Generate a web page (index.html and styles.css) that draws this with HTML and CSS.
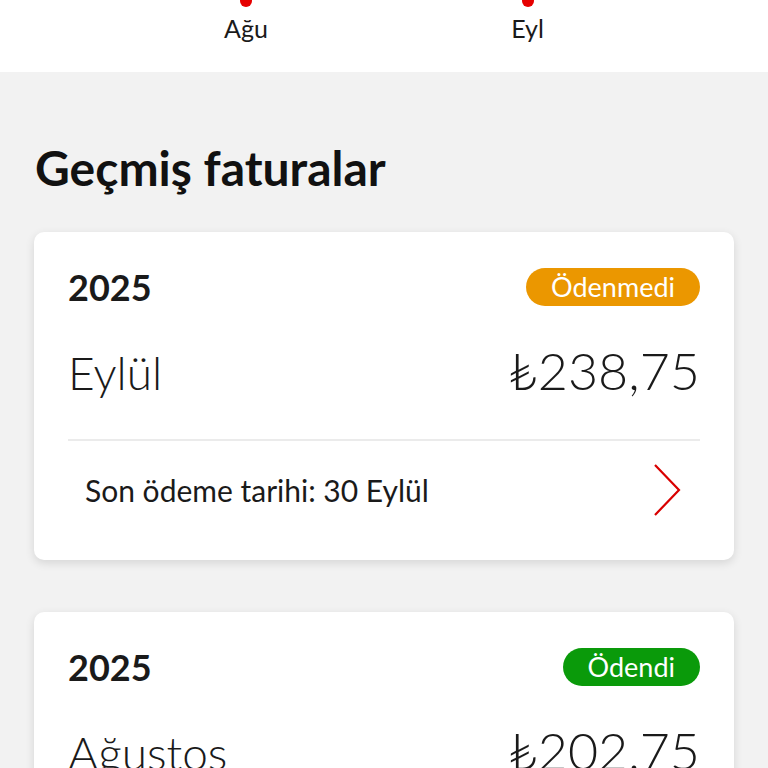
FILE: index.html
```html
<!DOCTYPE html>
<html lang="tr">
<head>
  <meta charset="UTF-8">
  <meta name="viewport" content="width=device-width, initial-scale=1.0">
  <title>Faturalar</title>
  <link rel="stylesheet" href="styles.css">
</head>
<body>

  <div class="chart-axis">
    <div class="month"><span class="dot"></span><span class="month-name">Ağu</span></div>
    <div class="month"><span class="dot"></span><span class="month-name">Eyl</span></div>
  </div>

  <div class="history">
    <h2 class="history-title">Geçmiş faturalar</h2>

    <div class="bill">
      <div class="bill-top">
        <span class="bill-year">2025</span>
        <span class="badge badge-unpaid">Ödenmedi</span>
      </div>
      <div class="bill-main">
        <span class="bill-month">Eylül</span>
        <span class="bill-amount">₺238,75</span>
      </div>
      <div class="bill-foot">
        <span class="bill-due">Son ödeme tarihi: 30 Eylül</span>
        <svg class="chevron" width="28" height="52" viewBox="0 0 28 52">
          <path d="M2 1 L26 26 L2 51" fill="none" stroke="#d90000" stroke-width="2.2"/>
        </svg>
      </div>
    </div>

    <div class="bill">
      <div class="bill-top">
        <span class="bill-year">2025</span>
        <span class="badge badge-paid">Ödendi</span>
      </div>
      <div class="bill-main">
        <span class="bill-month">Ağustos</span>
        <span class="bill-amount">₺202,75</span>
      </div>
      <div class="bill-foot">
        <span class="bill-due">Ödeme tarihi: 28 Ağustos</span>
      </div>
    </div>
  </div>

</body>
</html>
```

FILE: styles.css
```css
body{
  margin:0;
  background:#f2f2f2;
  font-family:Lato, "Noto Sans", sans-serif;
  color:#1a1a1a;
}
.chart-axis{
  background:#fff;
  height:72px;
  display:grid;
  grid-template-columns:105px 282px 281px 1fr;
}
.chart-axis .month{
  display:flex;
  flex-direction:column;
  align-items:center;
}
.chart-axis .month:first-child{
  grid-column:2;
}
.chart-axis .dot{
  width:12px;
  height:12px;
  margin-top:-5px;
  border-radius:50%;
  background:#e60000;
}
.chart-axis .month-name{
  font-size:25px;
  line-height:30px;
  margin-top:6px;
}
.history{
  padding:68px 34px 0;
}
.history-title{
  margin:0 0 36px 1px;
  font-size:48px;
  line-height:56px;
  font-weight:700;
  color:#111;
}
.bill{
  background:#fff;
  border-radius:10px;
  box-shadow:0 3px 10px rgba(0,0,0,.12);
  padding:33px 34px 0;
  margin-bottom:52px;
}
.bill-top{
  display:flex;
  justify-content:space-between;
  align-items:center;
}
.bill-year{
  font-size:36px;
  font-weight:700;
}
.badge{
  color:#fff;
  font-size:27px;
  line-height:38px;
  padding:0 25px;
  border-radius:19px;
}
.badge-unpaid{ background:#eb9700; }
.badge-paid{ background:#0a9a0a; }
.bill-main{
  display:flex;
  justify-content:space-between;
  align-items:baseline;
  padding:30px 0 38px;
  border-bottom:2px solid #ebebeb;
}
.bill-month{
  font-size:46px;
  font-weight:300;
}
.bill-amount{
  font-size:52px;
  font-weight:300;
}
.bill-foot{
  display:flex;
  justify-content:space-between;
  align-items:center;
  padding:23px 19px 44px 17px;
}
.bill-due{
  font-size:30px;
}
```
